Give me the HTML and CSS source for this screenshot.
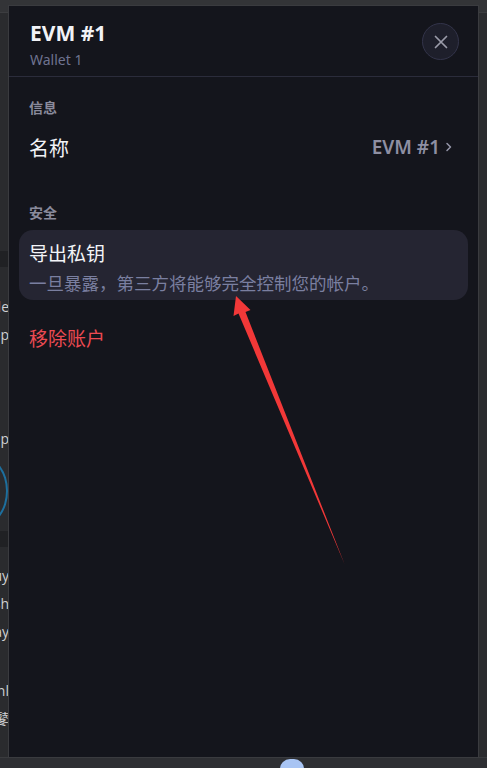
FILE: index.html
```html
<!DOCTYPE html>
<html lang="zh">
<head>
<meta charset="utf-8">
<link rel="stylesheet" href="styles.css">
</head>
<body>
<div class="backdrop">
  <div class="bg-topbar"></div>
  <div class="bg-col">
    <div class="bg-band"></div>
    <p class="bg-line l1">Trade</p>
    <p class="bg-line">Swap</p>
    <p class="bg-line l3">App</p>
    <div class="bg-ring"></div>
    <div class="bg-band b2"></div>
    <p class="bg-line l4">Buy</p>
    <p class="bg-line">Cash</p>
    <p class="bg-line">Pay</p>
    <p class="bg-line l5">Onl</p>
    <p class="bg-line">图鼕</p>
  </div>
  <div class="bg-bottom"><span class="bg-dot"></span></div>
</div>

<div class="modal">
  <header class="modal-head">
    <div class="titles">
      <h1 class="title">EVM #1</h1>
      <p class="subtitle">Wallet 1</p>
    </div>
    <button class="close" aria-label="关闭">
      <svg width="16" height="16" viewBox="0 0 16 16"><path d="M2.5 2.5 L13.5 13.5 M13.5 2.5 L2.5 13.5" stroke="#9b9caa" stroke-width="1.7" stroke-linecap="round" fill="none"/></svg>
    </button>
  </header>

  <section class="body">
    <h2 class="section-label first">信息</h2>
    <div class="row">
      <span class="row-title">名称</span>
      <span class="row-value">EVM #1
        <svg width="8" height="12" viewBox="0 0 8 12"><path d="M2 2.5 L5.5 6 L2 9.5" stroke="#9495a8" stroke-width="1.5" fill="none" stroke-linecap="round" stroke-linejoin="round"/></svg>
      </span>
    </div>

    <h2 class="section-label">安全</h2>
    <div class="card">
      <div class="card-title">导出私钥</div>
      <div class="card-desc">一旦暴露，第三方将能够完全控制您的帐户。</div>
    </div>

    <div class="danger">移除账户</div>
  </section>
</div>

<svg class="annot" width="487" height="768" viewBox="0 0 487 768">
  <polygon points="236,296 250.5,310 245.5,312 344.5,564 238.5,313.5 233.5,316" fill="#f23838"/>
</svg>
</body>
</html>
```

FILE: styles.css
```css
* { box-sizing: border-box; }
html, body { margin: 0; padding: 0; }
body {
  width: 487px;
  height: 768px;
  overflow: hidden;
  background: #2b2c2f;
  font-family: "Noto Sans", "Noto Sans CJK SC", sans-serif;
  position: relative;
}

/* background page */
.backdrop { height: 768px; display: flex; flex-direction: column; }
.bg-topbar { height: 13px; background: #333437; border-bottom: 1px solid #3c3d40; }
.bg-col { flex: 1; width: 9px; overflow: hidden; background: #2a2b2e; }
.bg-band { height: 16px; margin-top: 238px; background: #202124; }
.bg-band.b2 { margin-top: 5px; }
.bg-line {
  margin: 0;
  height: 28px;
  font: 14px/28px "Open Sans", "Noto Sans CJK SC", sans-serif;
  color: #cfd0d2;
  white-space: nowrap;
  direction: rtl;
  text-align: right;
  width: 9px;
}
.bg-line.l1 { margin-top: 26px; }
.bg-line.l3 { margin-top: 76px; }
.bg-ring { height: 70px; margin-top: 3px; margin-left: -44px; width: 52px; border: 2px solid #1d6f9e; border-radius: 50%; }
.bg-line.l4 { margin-top: 15px; }
.bg-line.l5 { margin-top: 31px; }
.bg-bottom { height: 11px; background: #2e2f33; border-top: 1px solid #3a3b3e; }
.bg-dot { display: block; width: 24px; height: 10px; margin: 1px 0 0 280px; border-radius: 12px 12px 0 0; background: #a8c4f3; }

/* modal */
.modal {
  position: absolute;
  left: 8px;
  top: 5px;
  width: 471px;
  height: 753px;
  background: #14151c;
  border: 1px solid #3a3b3f;
  display: flex;
  flex-direction: column;
}
.modal-head {
  height: 71px;
  padding: 0 19px 0 21px;
  display: flex;
  align-items: center;
  justify-content: space-between;
  border-bottom: 1px solid #2b2c3b;
}
.titles { padding-top: 6px; }
.title {
  margin: 0;
  font-size: 21px;
  line-height: 28px;
  font-weight: 700;
  color: #f1f2f6;
}
.subtitle {
  margin: 3px 0 0;
  font-size: 14px;
  line-height: 20px;
  color: #6f7390;
}
.close {
  width: 37px;
  height: 37px;
  border-radius: 50%;
  background: #1e1f2b;
  border: 1px solid #33344a;
  display: flex;
  align-items: center;
  justify-content: center;
  padding: 0;
  margin-top: 1px;
}

.body { padding: 0 10px; display: flex; flex-direction: column; }
.section-label {
  margin: 0;
  padding: 0 10px;
  font-size: 14px;
  line-height: 20px;
  font-weight: 700;
  color: #8a8b9c;
}
.section-label.first { margin-top: 21px; }
.row {
  height: 44px;
  padding: 0 15px 0 10px;
  margin-top: 7px;
  display: flex;
  align-items: center;
  justify-content: space-between;
}
.row-title { font-size: 20px; color: #f1f2f6; }
.row-value {
  font-size: 19px;
  font-weight: 600;
  color: #8e8fa3;
  display: flex;
  align-items: center;
  gap: 5px;
}
.row + .section-label { margin-top: 34px; }
.section-label + .card { margin-top: 7px; }
.card {
  background: #252532;
  border-radius: 14px;
  height: 70px;
  padding: 11px 10px 0;
  display: flex;
  flex-direction: column;
}
.card-title { font-size: 19px; line-height: 26px; color: #f3f4f8; }
.card-desc { margin-top: 4px; font-size: 17.5px; line-height: 24px; color: #7a7fa0; white-space: nowrap; }
.danger {
  margin-top: 25px;
  padding: 0 10px;
  font-size: 19px;
  line-height: 28px;
  color: #ec4a52;
}

.annot { position: absolute; left: 0; top: 0; pointer-events: none; }
```
